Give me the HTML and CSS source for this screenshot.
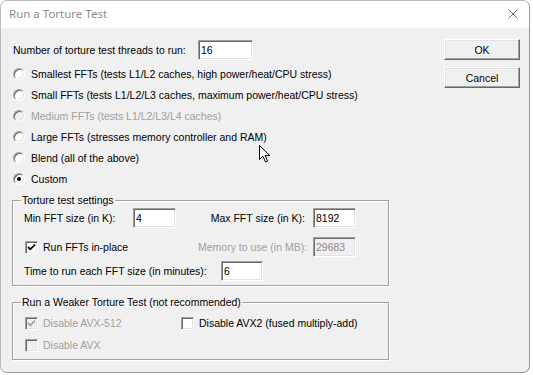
FILE: index.html
```html
<!DOCTYPE html>
<html lang="en">
<head>
    <meta charset="UTF-8">
    <title>Run a Torture Test</title>
    <link rel="stylesheet" href="styles.css">
</head>
<body>
    <div class="window">
        <div class="titlebar">
            <span class="title">Run a Torture Test</span>
            <svg class="close" width="10" height="10" viewBox="0 0 10 10">
                <path d="M0.5 0.5 L9.5 9.5 M9.5 0.5 L0.5 9.5" stroke="#6b6b6b" stroke-width="1" fill="none"/>
            </svg>
        </div>

        <div class="dialog">
            <div class="main">
                <div class="row threads">
                    <span class="threads-label">Number of torture test threads to run:</span>
                    <span class="edit w55">16</span>
                </div>

                <!-- FFT size choices -->
                <div class="radios">
                    <div class="opt"><span class="radio"></span>Smallest FFTs (tests L1/L2 caches, high power/heat/CPU stress)</div>
                    <div class="opt"><span class="radio"></span>Small FFTs (tests L1/L2/L3 caches, maximum power/heat/CPU stress)</div>
                    <div class="opt disabled"><span class="radio"></span>Medium FFTs (tests L1/L2/L3/L4 caches)</div>
                    <div class="opt"><span class="radio"></span>Large FFTs (stresses memory controller and RAM)</div>
                    <div class="opt"><span class="radio"></span>Blend (all of the above)</div>
                    <div class="opt"><span class="radio checked"></span>Custom</div>
                </div>

                <fieldset class="group settings">
                    <legend>Torture test settings</legend>
                    <div class="row">
                        <span class="min-label">Min FFT size (in K):</span>
                        <span class="edit w43">4</span>
                        <span class="max-label">Max FFT size (in K):</span>
                        <span class="edit w43">8192</span>
                    </div>
                    <div class="row gap9">
                        <span class="check-item inplace"><span class="checkbox checked"><svg width="11" height="11" viewBox="0 0 11 11"><path d="M2 5 L4.3 7.3 L9 2.6" stroke="#000" stroke-width="1.8" fill="none"/></svg></span>Run FFTs in-place</span>
                        <span class="mem-label disabled">Memory to use (in MB):</span>
                        <span class="edit w43 off">29683</span>
                    </div>
                    <div class="row gap4">
                        <span class="time-label">Time to run each FFT size (in minutes):</span>
                        <span class="edit w42">6</span>
                    </div>
                </fieldset>

                <fieldset class="group weaker">
                    <legend>Run a Weaker Torture Test (not recommended)</legend>
                    <div class="row first">
                        <span class="check-item avx512 disabled"><span class="checkbox checked off"><svg width="11" height="11" viewBox="0 0 11 11"><path d="M2 5 L4.3 7.3 L9 2.6" stroke="#a0a0a0" stroke-width="1.8" fill="none"/></svg></span>Disable AVX-512</span>
                        <span class="check-item"><span class="checkbox"></span>Disable AVX2 (fused multiply-add)</span>
                    </div>
                    <div class="row gap2">
                        <span class="check-item disabled"><span class="checkbox off"></span>Disable AVX</span>
                    </div>
                </fieldset>
            </div>

            <div class="buttons">
                <button class="btn">OK</button>
                <button class="btn">Cancel</button>
            </div>
        </div>

        <!-- mouse pointer resting over the dialog -->
        <svg class="pointer" width="12" height="18" viewBox="0 0 12 18">
            <path d="M0.5 0.5 L0.5 14.5 L4 11.3 L6.5 17 L8.5 16.1 L6.1 10.6 L10.8 10.6 Z" fill="#fff" stroke="#000" stroke-width="1"/>
        </svg>
    </div>
</body>
</html>
```

FILE: styles.css
```css
body {
    margin: 0;
    background: #fff;
    font-family: "Liberation Sans", Arial, sans-serif;
    font-size: 10.5px;
    color: #000;
}

.window {
    position: relative;
    width: 530px;
    height: 373px;
    box-sizing: border-box;
    border: 1px solid #b9b9b9;
    border-right-color: #9a9a9a;
    border-bottom-color: #9a9a9a;
    border-radius: 7px;
    overflow: hidden;
    background: #f0f0f0;
    display: flex;
    flex-direction: column;
}

.titlebar {
    height: 27px;
    background: #fff;
    display: flex;
    align-items: center;
    justify-content: space-between;
    padding: 0 11px 2px 8px;
    box-sizing: border-box;
}

.title {
    font-family: "Noto Sans", "Open Sans", sans-serif;
    font-size: 11.5px;
    color: #8c8c8c;
}

.dialog {
    flex: 1;
    display: flex;
    padding: 11px 9px 0 11px;
}

.main {
    width: 377px;
}

.row {
    display: flex;
    align-items: center;
    height: 20px;
    white-space: nowrap;
}

.gap9 { margin-top: 9px; }
.gap4 { margin-top: 4px; }
.gap2 { margin-top: 2px; }

.threads {
    height: 21px;
}

.threads-label {
    width: 185px;
    margin-left: 1px;
}

/* sunken edit boxes */
.edit {
    display: inline-block;
    box-sizing: border-box;
    height: 20px;
    line-height: 18px;
    padding: 0 2px;
    background: #fff;
    border: 1px solid;
    border-color: #a0a0a0 #fff #fff #a0a0a0;
    box-shadow: inset 1px 1px 0 #696969, inset -1px -1px 0 #e3e3e3;
}

.edit.off {
    background: #f0f0f0;
    color: #8a8a8a;
}

.w55 { width: 55px; }
.w43 { width: 43px; }
.w42 { width: 42px; }

.radios {
    margin-top: 3px;
}

.opt {
    display: flex;
    align-items: center;
    height: 21px;
    margin-left: 1px;
    white-space: nowrap;
}

.radio {
    width: 12px;
    height: 12px;
    box-sizing: border-box;
    margin-right: 6px;
    border-radius: 50%;
    background: #fff;
    border: 1px solid;
    border-color: #a0a0a0 #fff #fff #a0a0a0;
    box-shadow: inset 1px 1px 0 #696969, inset -1px -1px 0 #e3e3e3;
    display: flex;
    align-items: center;
    justify-content: center;
}

.radio.checked::after {
    content: "";
    width: 4px;
    height: 4px;
    border-radius: 50%;
    background: #000;
}

.disabled {
    color: #a0a0a0;
}

.disabled .radio {
    background: #f0f0f0;
}

/* group boxes */
.group {
    margin: 4px 0 0 0;
    padding: 1px 0 4px 11px;
    width: 377px;
    box-sizing: border-box;
    border: 1px solid #a0a0a0;
    box-shadow: 1px 1px 0 #fff, inset 1px 1px 0 #fff;
}

.group legend {
    line-height: 14px;
    padding: 0 1px;
    margin-left: -3px;
}

.weaker {
    margin-top: 9px;
    padding-bottom: 4px;
}

.weaker .first {
    margin-top: 3px;
}

.min-label {
    width: 109px;
}

.max-label {
    width: 129px;
    padding-right: 8px;
    text-align: right;
}

.mem-label {
    width: 107px;
    padding-right: 8px;
    text-align: right;
}

.time-label {
    width: 197px;
}

.check-item {
    display: flex;
    align-items: center;
    margin-left: 1px;
}

.inplace {
    width: 173px;
}

.avx512 {
    width: 155px;
}

.checkbox {
    width: 13px;
    height: 13px;
    box-sizing: border-box;
    margin-right: 5px;
    background: #fff;
    border: 1px solid;
    border-color: #a0a0a0 #fff #fff #a0a0a0;
    box-shadow: inset 1px 1px 0 #696969, inset -1px -1px 0 #e3e3e3;
    display: flex;
    align-items: center;
    justify-content: center;
}

.checkbox.off {
    background: #f0f0f0;
}

.checkbox svg {
    display: block;
}

.buttons {
    margin-left: auto;
    display: flex;
    flex-direction: column;
    gap: 7px;
}

.btn {
    width: 76px;
    height: 21px;
    padding: 0;
    font-family: "Liberation Sans", Arial, sans-serif;
    font-size: 10.5px;
    color: #000;
    background: #f0f0f0;
    border: 1px solid;
    border-color: #fff #696969 #696969 #fff;
    box-shadow: inset -1px -1px 0 #a0a0a0, inset 1px 1px 0 #e3e3e3;
}

.pointer {
    position: absolute;
    left: 258px;
    top: 144px;
}
```
